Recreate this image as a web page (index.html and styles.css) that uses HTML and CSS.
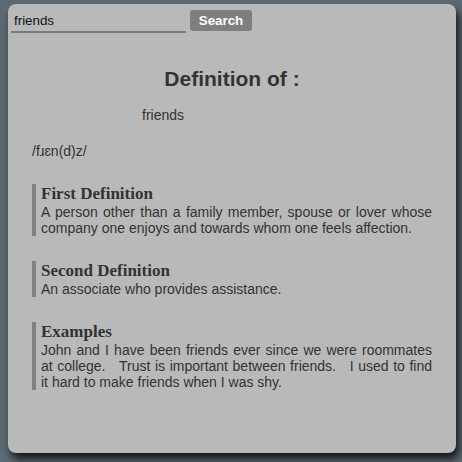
FILE: index.html
```html
<!DOCTYPE html>
<html>
<head>
<meta charset="utf-8">
<link rel="stylesheet" href="styles.css">
</head>
<body>
<div class="card">
  <form class="search">
    <input class="search-input" type="text" value="friends">
    <button class="search-btn" type="button">Search</button>
  </form>
  <div class="content">
    <h1 class="title">Definition of :</h1>
    <p class="word">friends</p>
    <p class="phonetic">/fɹɛn(d)z/</p>
    <div class="def">
      <h3 class="def-title">First Definition</h3>
      <p class="def-text">A person other than a family member, spouse or lover whose company one enjoys and towards whom one feels affection.</p>
    </div>
    <div class="def">
      <h3 class="def-title">Second Definition</h3>
      <p class="def-text">An associate who provides assistance.</p>
    </div>
    <div class="def">
      <h3 class="def-title">Examples</h3>
      <p class="def-text">John and I have been friends ever since we were roommates at college. &nbsp; Trust is important between friends. &nbsp; I used to find it hard to make friends when I was shy.</p>
    </div>
  </div>
</div>
</body>
</html>
```
FILE: styles.css
```css
html, body {
  margin: 0;
  padding: 0;
}
body {
  background: #5e6a73;
  width: 462px;
  height: 462px;
  overflow: hidden;
  padding: 4px 0 0 8px;
  box-sizing: border-box;
  font-family: "Liberation Sans", Arial, sans-serif;
}
.card {
  width: 448px;
  height: 449px;
  background: #b9b9b9;
  border-radius: 8px;
  box-shadow: 3px 6px 8px rgba(0, 0, 0, 0.8);
  box-sizing: border-box;
  padding: 6px 3px 0 3px;
}
.search {
  display: flex;
  align-items: flex-end;
  gap: 4px;
  margin: 0;
}
.search-input {
  width: 175px;
  height: 23px;
  box-sizing: border-box;
  border: none;
  border-bottom: 2px solid #7a7a7a;
  background: transparent;
  padding: 0 3px;
  margin: 0;
  font-family: "Liberation Sans", Arial, sans-serif;
  font-size: 13.33px;
  color: #111;
  outline: none;
}
.search-btn {
  height: 21px;
  width: 62px;
  margin: 0 0 2px 0;
  padding: 0;
  border: none;
  border-radius: 3px;
  background: #7f7f7f;
  color: #fff;
  font-family: "Liberation Sans", Arial, sans-serif;
  font-size: 13.33px;
  font-weight: bold;
}
.content {
  padding: 0 21px;
  color: #333;
}
.title {
  margin: 34px 0 0 0;
  text-align: center;
  font-size: 21px;
  line-height: 24px;
  font-weight: bold;
  color: #333;
}
.word {
  margin: 16px 0 0 110px;
  font-size: 14px;
  line-height: 16px;
}
.phonetic {
  margin: 20px 0 0 0;
  font-size: 14px;
  line-height: 16px;
}
.def {
  border-left: 4px solid #808080;
  padding-left: 5px;
  margin-top: 25px;
}
.def:first-of-type {
  margin-top: 25px;
}
.def-title {
  margin: 0;
  font-family: "Liberation Serif", "Times New Roman", serif;
  font-size: 17px;
  line-height: 20px;
  font-weight: bold;
  color: #333;
}
.def-text {
  margin: 0;
  font-size: 14px;
  line-height: 16px;
  text-align: justify;
}
```
